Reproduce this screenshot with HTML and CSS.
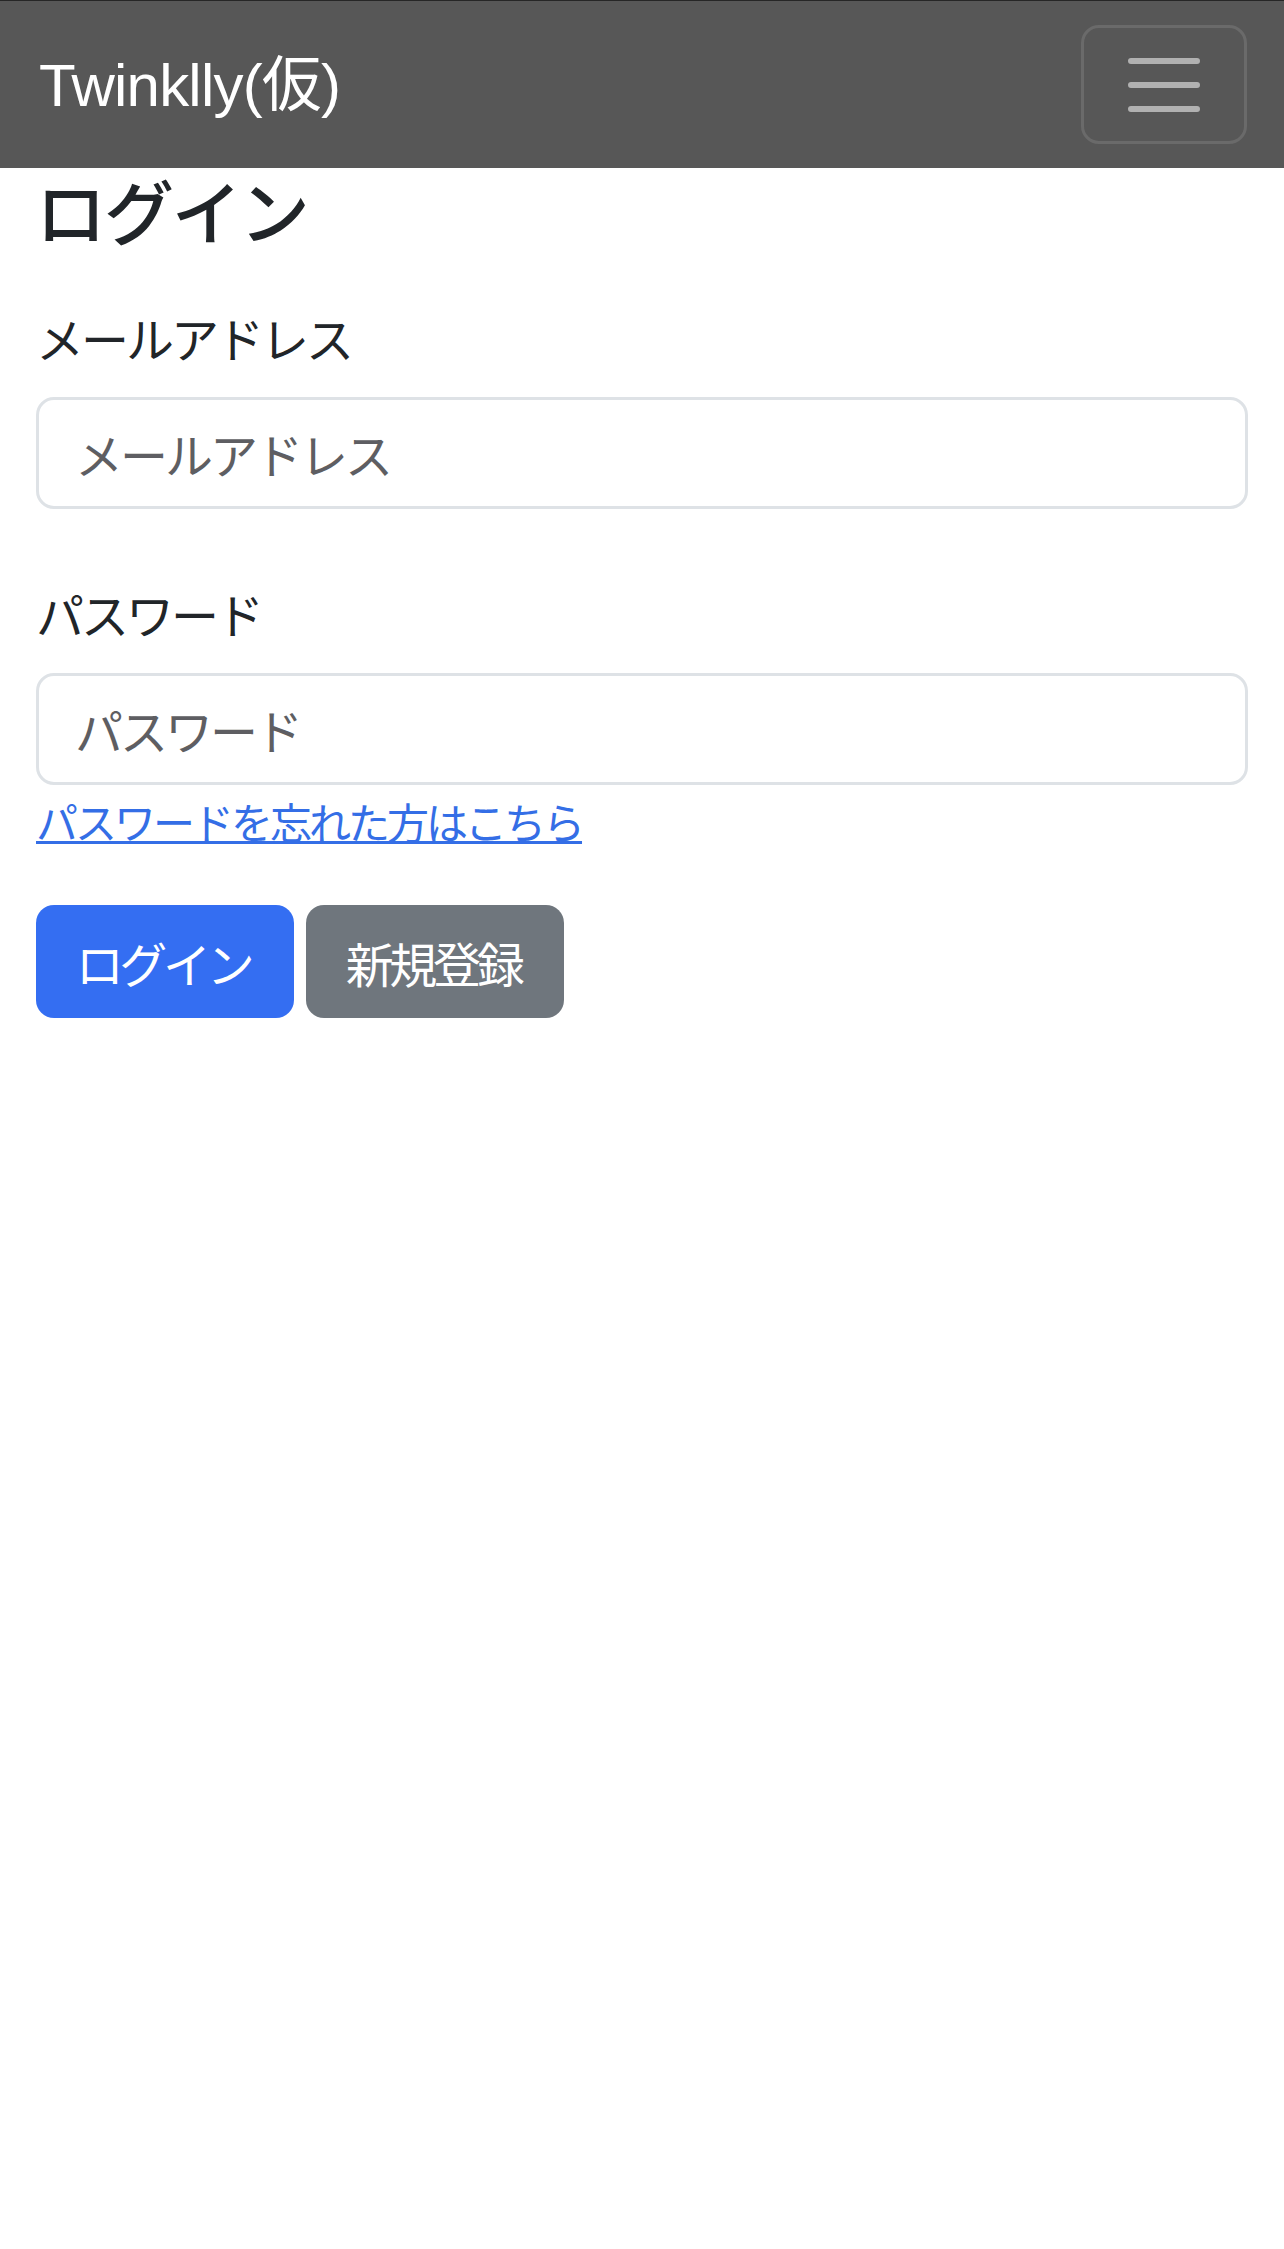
FILE: index.html
```html
<!DOCTYPE html>
<html lang="ja">
<head>
<meta charset="utf-8">
<title>ログイン - Twinklly(仮)</title>
<link rel="stylesheet" href="styles.css">
</head>
<body>
<nav class="navbar">
  <a class="brand" href="#">Twinklly(仮)</a>
  <button class="toggler" type="button" aria-label="メニュー">
    <svg viewBox="0 0 30 30" aria-hidden="true">
      <path d="M4 7h22M4 15h22M4 23h22" fill="none" stroke="#b1b1b1" stroke-width="2" stroke-linecap="round"/>
    </svg>
  </button>
</nav>
<main class="container">
  <h3 class="title">ログイン</h3>
  <form class="login-form">
    <div class="group">
      <label class="label" for="email">メールアドレス</label>
      <input class="input" id="email" type="email" placeholder="メールアドレス">
    </div>
    <div class="group">
      <label class="label" for="password">パスワード</label>
      <input class="input" id="password" type="password" placeholder="パスワード">
    </div>
    <div class="forgot-row"><a class="forgot" href="#">パスワードを忘れた方はこちら</a></div>
    <div class="actions">
      <button class="btn btn-primary" type="button">ログイン</button>
      <button class="btn btn-secondary" type="button">新規登録</button>
    </div>
  </form>
</main>
</body>
</html>
```
FILE: styles.css
```css
html, body {
  margin: 0;
  padding: 0;
  background: #fff;
}
body {
  font-family: "Noto Sans CJK JP", sans-serif;
  font-size: 48px;
  line-height: 1.5;
  letter-spacing: -0.0625em;
  color: #212529;
}

.navbar {
  display: flex;
  align-items: center;
  justify-content: space-between;
  height: 168px;
  box-sizing: border-box;
  border-top: 1px solid #262626;
  background: #575757;
  padding: 0 37px 0 36px;
}
.brand {
  font-family: "Liberation Sans", "Noto Sans CJK JP", sans-serif;
  font-size: 60px;
  line-height: 90px;
  letter-spacing: -0.8px;
  color: #fff;
  text-decoration: none;
  padding-left: 3px;
  margin-top: 2px;
}
.toggler {
  width: 166px;
  height: 119px;
  box-sizing: border-box;
  border: 3px solid #6a6a6a;
  border-radius: 18px;
  background: transparent;
  padding: 0;
  display: flex;
  align-items: center;
  justify-content: center;
}
.toggler svg {
  width: 90px;
  height: 90px;
  display: block;
}

.container {
  padding: 0 36px;
}
.title {
  margin: 0 0 49px;
  font-size: 70px;
  font-weight: 500;
  line-height: 84px;
  letter-spacing: -0.03em;
}
.label {
  display: block;
  margin-bottom: 24px;
  font-size: 48px;
  line-height: 72px;
}
.input {
  display: block;
  width: 100%;
  box-sizing: border-box;
  height: 112px;
  border: 3px solid #dee2e6;
  border-radius: 18px;
  padding: 0 36px;
  font-family: inherit;
  font-size: 48px;
  letter-spacing: -0.0625em;
  color: #212529;
  background: #fff;
  outline: none;
}
.input::placeholder {
  color: #5e5e62;
  opacity: 1;
}
.group + .group {
  margin-top: 68px;
}
.forgot-row {
  margin-top: 6px;
  font-size: 42px;
  line-height: 60px;
}
.forgot {
  color: #346ee6;
  text-decoration: underline;
  text-decoration-thickness: 3px;
}
.actions {
  display: flex;
  gap: 12px;
  margin-top: 54px;
}
.btn {
  width: 258px;
  height: 113px;
  padding: 0 4px 0 0;
  border: 0;
  border-radius: 18px;
  font-family: inherit;
  font-size: 48px;
  letter-spacing: -0.09em;
  line-height: 1;
  color: #fff;
}
.btn-primary {
  background: #346ef2;
}
.btn-secondary {
  background: #6f767d;
}
```
